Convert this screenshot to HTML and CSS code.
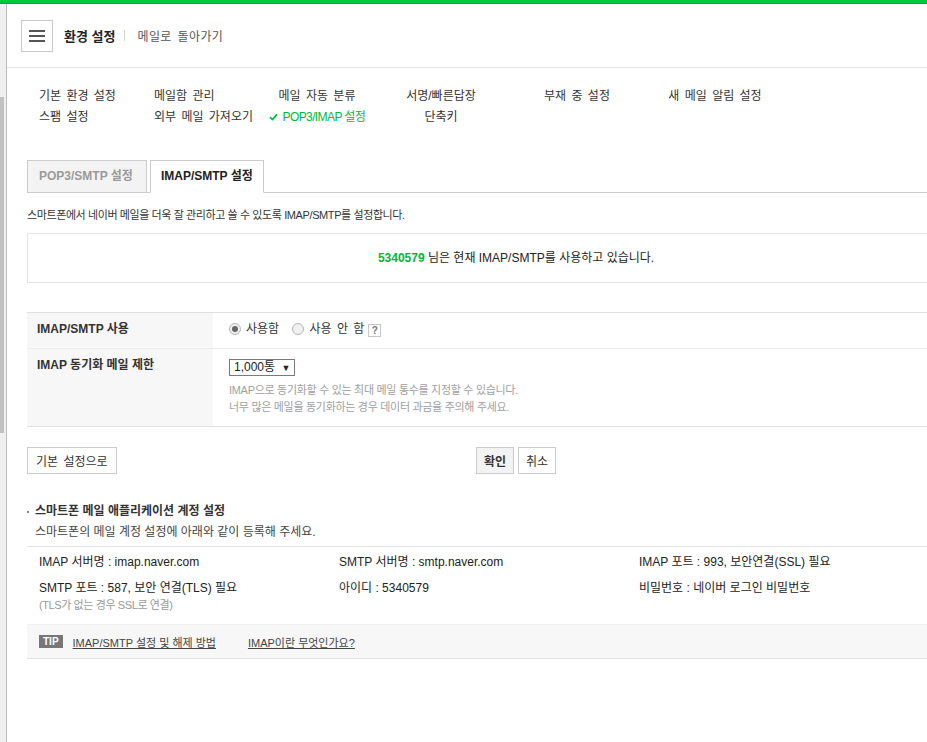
FILE: index.html
```html
<!DOCTYPE html>
<html lang="ko">
<head>
  <meta charset="UTF-8">
  <meta name="viewport" content="width=device-width, initial-scale=1.0">
  <title>환경 설정 - IMAP/SMTP 설정</title>
  <link rel="stylesheet" href="styles.css">
</head>
<body>

  <div class="topbar"></div>

  <div class="page">
    <!-- 왼쪽 스크롤 영역 -->
    <div class="side">
      <div class="side-thumb"></div>
    </div>

    <div class="main">
      <!-- 상단 헤더 -->
      <div class="header">
        <button class="menu-button" type="button">
          <span></span><span></span><span></span>
        </button>
        <h1 class="header-title">환경 설정</h1>
        <span class="header-bar"></span>
        <a class="header-link" href="#">메일로 돌아가기</a>
      </div>

      <!-- 설정 메뉴 -->
      <ul class="nav">
        <li class="left"><a href="#">기본 환경 설정</a></li>
        <li class="left"><a href="#">메일함 관리</a></li>
        <li><a href="#">메일 자동 분류</a></li>
        <li><a href="#">서명/빠른답장</a></li>
        <li><a href="#">부재 중 설정</a></li>
        <li><a href="#">새 메일 알림 설정</a></li>
        <li class="left"><a href="#">스팸 설정</a></li>
        <li class="left"><a href="#">외부 메일 가져오기</a></li>
        <li class="on">
          <a href="#">
            <svg class="check" width="9" height="8" viewBox="0 0 9 8"><path d="M1 4.2 L3.4 6.6 L8 1.4" fill="none" stroke="#00b93a" stroke-width="1.7"/></svg>
            POP3/IMAP 설정
          </a>
        </li>
        <li><a href="#">단축키</a></li>
      </ul>

      <div class="content">
        <div class="tabs">
          <a class="tab" href="#">POP3/SMTP 설정</a>
          <a class="tab active" href="#">IMAP/SMTP 설정</a>
        </div>

        <p class="desc">스마트폰에서 네이버 메일을 더욱 잘 관리하고 쓸 수 있도록 IMAP/SMTP를 설정합니다.</p>

        <div class="status-box">
          <strong class="user-id">5340579</strong> 님은 현재 IMAP/SMTP를 사용하고 있습니다.
        </div>

        <!-- 설정 테이블 -->
        <table class="setting-table">
          <tr class="row-use">
            <th>IMAP/SMTP 사용</th>
            <td>
              <label class="radio"><span class="radio-dot checked"></span>사용함</label>
              <label class="radio"><span class="radio-dot"></span>사용 안 함</label><span class="help">?</span>
            </td>
          </tr>
          <tr class="row-limit">
            <th>IMAP 동기화 메일 제한</th>
            <td>
              <div class="select-box">1,000통 <span class="arrow">▼</span></div>
              <p class="note">IMAP으로 동기화할 수 있는 최대 메일 통수를 지정할 수 있습니다.<br>너무 많은 메일을 동기화하는 경우 데이터 과금을 주의해 주세요.</p>
            </td>
          </tr>
        </table>

        <div class="button-row">
          <button class="btn" type="button">기본 설정으로</button>
          <div class="btn-group">
            <button class="btn btn-ok" type="button">확인</button>
            <button class="btn" type="button">취소</button>
          </div>
        </div>

        <!-- 계정 정보 -->
        <h3 class="section-title">스마트폰 메일 애플리케이션 계정 설정</h3>
        <p class="section-sub">스마트폰의 메일 계정 설정에 아래와 같이 등록해 주세요.</p>

        <div class="info-box">
          <div class="info-grid">
            <div>IMAP 서버명 : imap.naver.com</div>
            <div>SMTP 서버명 : smtp.naver.com</div>
            <div>IMAP 포트 : 993, 보안연결(SSL) 필요</div>
            <div>SMTP 포트 : 587, 보안 연결(TLS) 필요<span class="small">(TLS가 없는 경우 SSL로 연결)</span></div>
            <div>아이디 : 5340579</div>
            <div>비밀번호 : 네이버 로그인 비밀번호</div>
          </div>
        </div>

        <div class="tip">
          <span class="tip-badge">TIP</span>
          <a href="#">IMAP/SMTP 설정 및 해제 방법</a>
          <a href="#">IMAP이란 무엇인가요?</a>
        </div>
      </div>
    </div>
  </div>

</body>
</html>
```

FILE: styles.css
```css
* {
  margin: 0;
  padding: 0;
  box-sizing: border-box;
}

body {
  font-family: "Liberation Sans", "Noto Sans CJK KR", sans-serif;
  font-size: 12px;
  color: #333;
  background-color: #fff;
  overflow: hidden;
  height: 742px;
}

a {
  color: inherit;
  text-decoration: none;
}

ul {
  list-style: none;
}

.topbar {
  height: 4px;
  background-color: #00c73c;
  border-bottom: 1px solid #00a832;
}

.page {
  display: flex;
  height: 738px;
}

.side {
  width: 7px;
  flex-shrink: 0;
  background-color: #f0f0f0;
  border-right: 1px solid #bdbdbd;
  padding-top: 93px;
}

.side-thumb {
  width: 4px;
  height: 336px;
  background-color: #c1c1c1;
}

.main {
  flex: 1;
}

/* 헤더 */
.header {
  height: 64px;
  display: flex;
  align-items: center;
  padding-left: 14px;
  border-bottom: 1px solid #e5e5e5;
}

.menu-button {
  width: 32px;
  height: 32px;
  border: 1px solid #c8c8c8;
  background-color: #fff;
  display: flex;
  flex-direction: column;
  justify-content: center;
  align-items: center;
  gap: 3px;
  margin-top: 1px;
}

.menu-button span {
  display: block;
  width: 16px;
  height: 2px;
  background-color: #555;
}

.header-title {
  font-size: 13px;
  font-weight: bold;
  color: #222;
  margin-left: 11px;
}

.header-bar {
  width: 1px;
  height: 11px;
  background-color: #d5d5d5;
  margin: 0 12px 0 9px;
}

.header-link {
  font-size: 12px;
  color: #555;
  word-spacing: 2px;
  letter-spacing: 0.4px;
}

/* 메뉴 */
.nav {
  display: grid;
  grid-template-columns: 115px 103px 120px 128px 144px 132px;
  padding: 18px 0 0 32px;
  line-height: 21px;
  word-spacing: 2px;
}

.nav li {
  text-align: center;
}

.nav li.left {
  text-align: left;
}

.nav li.on a {
  color: #00b93a;
  word-spacing: 0;
  letter-spacing: -0.6px;
}

.check {
  margin-right: 2px;
  vertical-align: 0;
}

/* 본문 */
.content {
  width: 978px;
  margin: 32px 0 0 20px;
}

.tabs {
  display: flex;
  gap: 3px;
  border-bottom: 1px solid #ccc;
  height: 33px;
}

.tab {
  height: 33px;
  line-height: 31px;
  padding: 0 10px;
  border: 1px solid #ccc;
  font-weight: bold;
  font-size: 12px;
  background-color: #f3f3f3;
  color: #9a9a9a;
}

.tab:first-child {
  padding: 0 13px 0 11px;
}

.tab.active {
  background-color: #fff;
  color: #222;
  border-bottom-color: #fff;
}

.desc {
  font-size: 11px;
  line-height: 16px;
  margin-top: 14px;
  color: #333;
  letter-spacing: -0.4px;
}

.status-box {
  margin-top: 10px;
  height: 50px;
  border: 1px solid #e5e5e5;
  text-align: center;
  line-height: 48px;
  color: #222;
}

.user-id {
  color: #00b93a;
}

/* 설정 테이블 */
.setting-table {
  width: 100%;
  margin-top: 29px;
  border-collapse: collapse;
  border-top: 1px solid #e0e0e0;
  border-bottom: 1px solid #e0e0e0;
}

.setting-table th {
  width: 186px;
  background-color: #f7f7f7;
  text-align: left;
  vertical-align: top;
  padding: 9px 10px 0;
  font-size: 12px;
  line-height: 15px;
  color: #333;
}

.setting-table tr + tr th,
.setting-table tr + tr td {
  border-top: 1px solid #ececec;
}

.setting-table td {
  padding: 8px 16px 0;
  vertical-align: top;
}

.row-use th,
.row-use td {
  height: 36px;
}

.row-limit th,
.row-limit td {
  height: 78px;
}

.radio {
  display: inline-flex;
  align-items: center;
  gap: 5px;
  margin-right: 10px;
  line-height: 16px;
  word-spacing: 2px;
}

.radio + .radio {
  margin-right: 4px;
}

.radio-dot {
  width: 12px;
  height: 12px;
  border-radius: 50%;
  border: 1px solid #b5b5b5;
  background-color: #f0f0f0;
  position: relative;
}

.radio-dot.checked::after {
  content: "";
  position: absolute;
  left: 2px;
  top: 2px;
  width: 6px;
  height: 6px;
  border-radius: 50%;
  background-color: #666;
}

.help {
  display: inline-block;
  width: 13px;
  height: 13px;
  border: 1px solid #c8c8c8;
  font-size: 10px;
  font-weight: bold;
  line-height: 11px;
  text-align: center;
  color: #777;
  vertical-align: 1px;
}

.select-box {
  display: inline-block;
  width: 66px;
  height: 17px;
  border: 1px solid #7a7a7a;
  line-height: 15px;
  padding-left: 4px;
  font-size: 12px;
  color: #222;
  margin-top: 2px;
}

.arrow {
  font-size: 9px;
  margin-left: 3px;
}

.note {
  margin-top: 6px;
  font-size: 11px;
  line-height: 17px;
  color: #a0a0a0;
  letter-spacing: -0.3px;
}

/* 버튼 */
.button-row {
  display: grid;
  grid-template-columns: 1fr auto 1fr;
  margin-top: 20px;
}

.btn {
  height: 27px;
  padding: 0 7px;
  border: 1px solid #ccc;
  background-color: #fff;
  font-family: inherit;
  font-size: 12px;
  color: #333;
  justify-self: start;
}

.button-row > .btn {
  word-spacing: 2px;
  padding: 0 8px;
}

.btn-group {
  display: flex;
  gap: 4px;
}

.btn-ok {
  background-color: #f3f3f3;
  font-weight: bold;
}

/* 계정 설정 */
.section-title {
  margin-top: 29px;
  font-size: 12px;
  line-height: 17px;
  color: #333;
  position: relative;
  padding-left: 8px;
}

.section-title::before {
  content: "";
  position: absolute;
  left: 0;
  top: 8px;
  width: 2px;
  height: 2px;
  background-color: #888;
}

.section-sub {
  padding-left: 8px;
  margin-top: 4px;
  line-height: 17px;
  color: #444;
}

.info-box {
  margin-top: 5px;
  border-top: 1px solid #e5e5e5;
  padding: 6px 0 11px 12px;
}

.info-grid {
  display: grid;
  grid-template-columns: 300px 300px 300px;
  row-gap: 8px;
  line-height: 18px;
  color: #222;
}

.small {
  display: block;
  font-size: 11px;
  line-height: 16px;
  color: #999;
  letter-spacing: -0.4px;
}

.tip {
  height: 35px;
  background-color: #f7f7f7;
  border-top: 1px solid #f0f0f0;
  border-bottom: 1px solid #e3e3e3;
  display: flex;
  align-items: center;
  padding-left: 12px;
  font-size: 11px;
}

.tip-badge {
  background-color: #777;
  color: #fff;
  font-size: 10px;
  font-weight: bold;
  padding: 0 4px;
  line-height: 13px;
  margin-right: 10px;
}

.tip a {
  text-decoration: underline;
  color: #444;
  margin-right: 32px;
}
```
